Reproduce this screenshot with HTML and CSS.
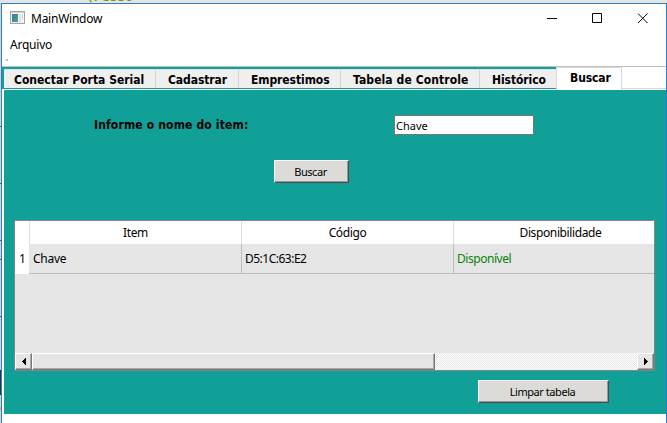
FILE: index.html
```html
<!DOCTYPE html>
<html lang="pt-BR">
<head>
<meta charset="utf-8">
<title>MainWindow</title>
<link rel="stylesheet" href="styles.css">
</head>
<body>
<div class="desktop-top"><span class="behind">(Pesso</span></div>
<div class="window-row">
<div class="desktop-left"><i class="notch n1"></i><i class="notch n2"></i><i class="notch n3"></i><i class="notch n4"></i><i class="notch n5"></i><i class="notch n6"></i><i class="notch n7"></i></div>
<main class="window">
  <header class="titlebar">
    <svg class="app-icon" width="15" height="13" viewBox="0 0 15 13" shape-rendering="crispEdges">
      <rect x=".5" y=".5" width="14" height="12" fill="#f4f4f4" stroke="#a0a4a6"/>
      <rect x="1" y="1" width="13" height="1" fill="#d0d4d6"/>
      <defs><linearGradient id="pic" x2="1" y2="1"><stop stop-color="#4777a0"/><stop offset="1" stop-color="#43a780"/></linearGradient></defs>
      <rect x="2" y="3" width="6" height="8" fill="url(#pic)"/>
      <rect x="9" y="3" width="2" height="8" fill="#dce4e4"/><rect x="12" y="3" width="1" height="5" fill="#c8d4d0"/>
    </svg>
    <span class="title">MainWindow</span>
    <svg class="controls" width="106" height="12" viewBox="0 0 106 12" fill="none" stroke="#000">
      <path d="M0 5.5h10M45.500 .5h9v9h-9z"/><path d="M91 .5l9.500 9.500M100.500 .5L91 10"/>
    </svg>
  </header>
  <nav class="menubar"><span>Arquivo</span></nav>
  <div class="toolbar"><i></i></div>
  <div class="tabbar">
    <div class="tabs">
      <div class="tab t1"><span>Conectar Porta Serial</span></div>
      <div class="tab t2"><span>Cadastrar</span></div>
      <div class="tab t3"><span>Emprestimos</span></div>
      <div class="tab t4"><span>Tabela de Controle</span></div>
      <div class="tab t5"><span>Histórico</span></div>
    </div>
    <div class="tab-active"><span>Buscar</span></div>
    <div class="tab-rest"></div>
  </div>
  <section class="page">
    <div class="form-row"><label for="item">Informe o nome do item:</label><div class="field" id="item"><span>Chave</span></div></div>
    <div class="button search"><span>Buscar</span></div>
    <div class="table">
      <div class="row head"><div class="num"></div><div class="c1"><span class="h1">Item</span></div><div class="c2"><span class="h2">Código</span></div><div class="c3"><span class="h3">Disponibilidade</span></div></div>
      <div class="row data"><div class="num">1</div><div class="c1"><span class="d1">Chave</span></div><div class="c2"><span class="d2">D5:1C:63:E2</span></div><div class="c3 ok"><span class="d3">Disponível</span></div></div>
      <div class="scroll">
        <div class="arrow"><svg width="4" height="7" shape-rendering="crispEdges"><path d="M4 0v7L0 3.500z"/></svg></div>
        <div class="thumb"></div>
        <div class="track"></div>
        <div class="arrow"><svg width="4" height="7" shape-rendering="crispEdges"><path d="M0 0v7l4-3.500z"/></svg></div>
      </div>
    </div>
    <div class="button clear"><span>Limpar tabela</span></div>
  </section>
</main>
</div>
</body>
</html>
```
FILE: styles.css
```css
* { box-sizing: border-box; }
body { margin: 0; width: 667px; height: 423px; overflow: hidden; background: #fff; color: #000; font: 12px/16px "Noto Sans", sans-serif; }
span, label { white-space: nowrap; }
.desktop-top { height: 3px; background: #e4e4e4; overflow: hidden; padding-left: 86px; }
.behind { display: block; font: bold 13px/16px "DejaVu Sans Mono", monospace; color: #8b8b20; margin-top: -11px; }
.window-row { display: flex; height: 420px; }
.desktop-left { width: 1px; background: #d4d4d4; display: flex; flex-direction: column; }
.notch { height: 1px; background: #555; flex: none; }
.n1 { margin-top: 123px; }
.n2 { margin-top: 56px; }
.n3 { margin-top: 56px; }
.n4 { margin-top: 18px; }
.n5 { margin-top: 56px; }
.n6 { margin-top: 53px; height: 25px; background: #333; }
.n7 { margin-top: 12px; height: 3px; background: #d6b84c; }
.window { width: 666px; height: 420px; border: 1px solid #2a7fc6; border-bottom: 0; background: #fff; }
.titlebar { height: 31px; display: flex; align-items: flex-start; padding: 7px 0 0 8px; }
.title { margin-left: 6px; letter-spacing: -.25px; }
.controls { margin: 2px 13px 0 auto; }
.menubar { height: 20px; padding: 2px 0 0 8px; letter-spacing: -.22px; }
.toolbar { height: 12px; border-bottom: 1px solid #bfbfbf; padding: 4px 0 0 4px; }
.toolbar i { display: block; width: 2px; height: 2px; background: #bbb; }
.tabbar { height: 23px; display: flex; font: bold 12px/16px "DejaVu Sans Condensed", "DejaVu Sans", sans-serif; }
.tabs { width: 554px; height: 22px; background: #10a098; display: flex; padding: 2px 0 1px 2px; }
.tab { height: 19px; background: #efefef; border-right: 1px solid #d5d5d5; border-top: 1px solid #d9e5e4; padding: 2px 0 0 12px; }
.t1 { width: 152px; padding-left: 10px; }
.t2 { width: 83px; letter-spacing: -.08px; }
.t3 { width: 102px; letter-spacing: -.08px; }
.t4 { width: 139px; letter-spacing: .1px; }
.t5 { width: 76px; border-right: 0; letter-spacing: -.08px; }
.tab-active { width: 66px; border: 1px solid #d9d9d9; border-bottom: 0; padding: 2px 0 0 13px; background: #fff; letter-spacing: -.1px; }
.tab-rest { flex: 1; height: 22px; border-bottom: 1px solid #d9d9d9; }
.page { margin: 0 0 0 2px; height: 324px; background: #10a098; padding: 25px 10px 0; display: flex; flex-direction: column; }
.form-row { display: flex; height: 20px; }
.form-row label { width: 300px; margin-left: 80px; padding-top: 2px; font: bold 12px/16px "DejaVu Sans Condensed", "DejaVu Sans", sans-serif; letter-spacing: .16px; }
.field { width: 140px; height: 20px; background: #fff; border: 1px solid #777; padding: 2px 0 0 1px; font-size: 11px; }
.button { background: #dcdbd7; border: 1px solid; border-color: #fff #4b4b4b #4b4b4b #fff; box-shadow: inset -1px -1px #999; text-align: center; font: 11px/22px "Noto Sans", sans-serif; flex: none; letter-spacing: -.45px; }
.search { width: 75px; height: 23px; margin: 25px 0 0 260px; padding-right: 2px; }
.clear { width: 131px; height: 23px; margin: 9px 0 0 464px; padding-right: 2px; }
.table { width: 641px; height: 151px; margin-top: 37px; background: #e6e6e6; border: 1px solid #858585; flex: none; display: flex; flex-direction: column; }
.row { display: flex; }
.num { width: 14px; background: #fff; padding-left: 4px; }
.c1, .c2 { width: 213px; border-right: 1px solid; }
.c3 { flex: 1; overflow: hidden; }
.head { height: 23px; background: #fff; line-height: 23px; text-align: center; letter-spacing: -.38px; }
.head .c1 { border-left: 1px solid #dedede; }
.head .c1, .head .c2 { border-right-color: #dedede; }
.head .c2, .data .c2 { width: 212px; }
.head .c3 { padding-left: 13px; }
.data { height: 30px; line-height: 29px; }
.data .c1, .data .c2, .data .c3 { border-bottom: 1px solid #bdbdbd; border-right-color: #bdbdbd; padding-left: 3px; }
.data .c1 { padding-left: 4px; letter-spacing: -.25px; }
.data .c2 { letter-spacing: -.5px; }
.data .c3 { border-right: 0; letter-spacing: -.45px; }
.ok { color: #078207; }
.scroll { margin-top: auto; height: 17px; display: flex; background: #e6e6e6; }
.arrow, .thumb { background: #e6e6e6; border: 1px solid; border-color: #fff #777 #777 #fff; box-shadow: inset -1px -1px #aaa; }
.arrow { width: 17px; display: flex; align-items: center; justify-content: center; }
.thumb { width: 403px; }
.track { flex: 1; background: repeating-conic-gradient(#fff 0 25%, #e6e6e6 0 50%) 0 0 / 2px 2px; }
```
